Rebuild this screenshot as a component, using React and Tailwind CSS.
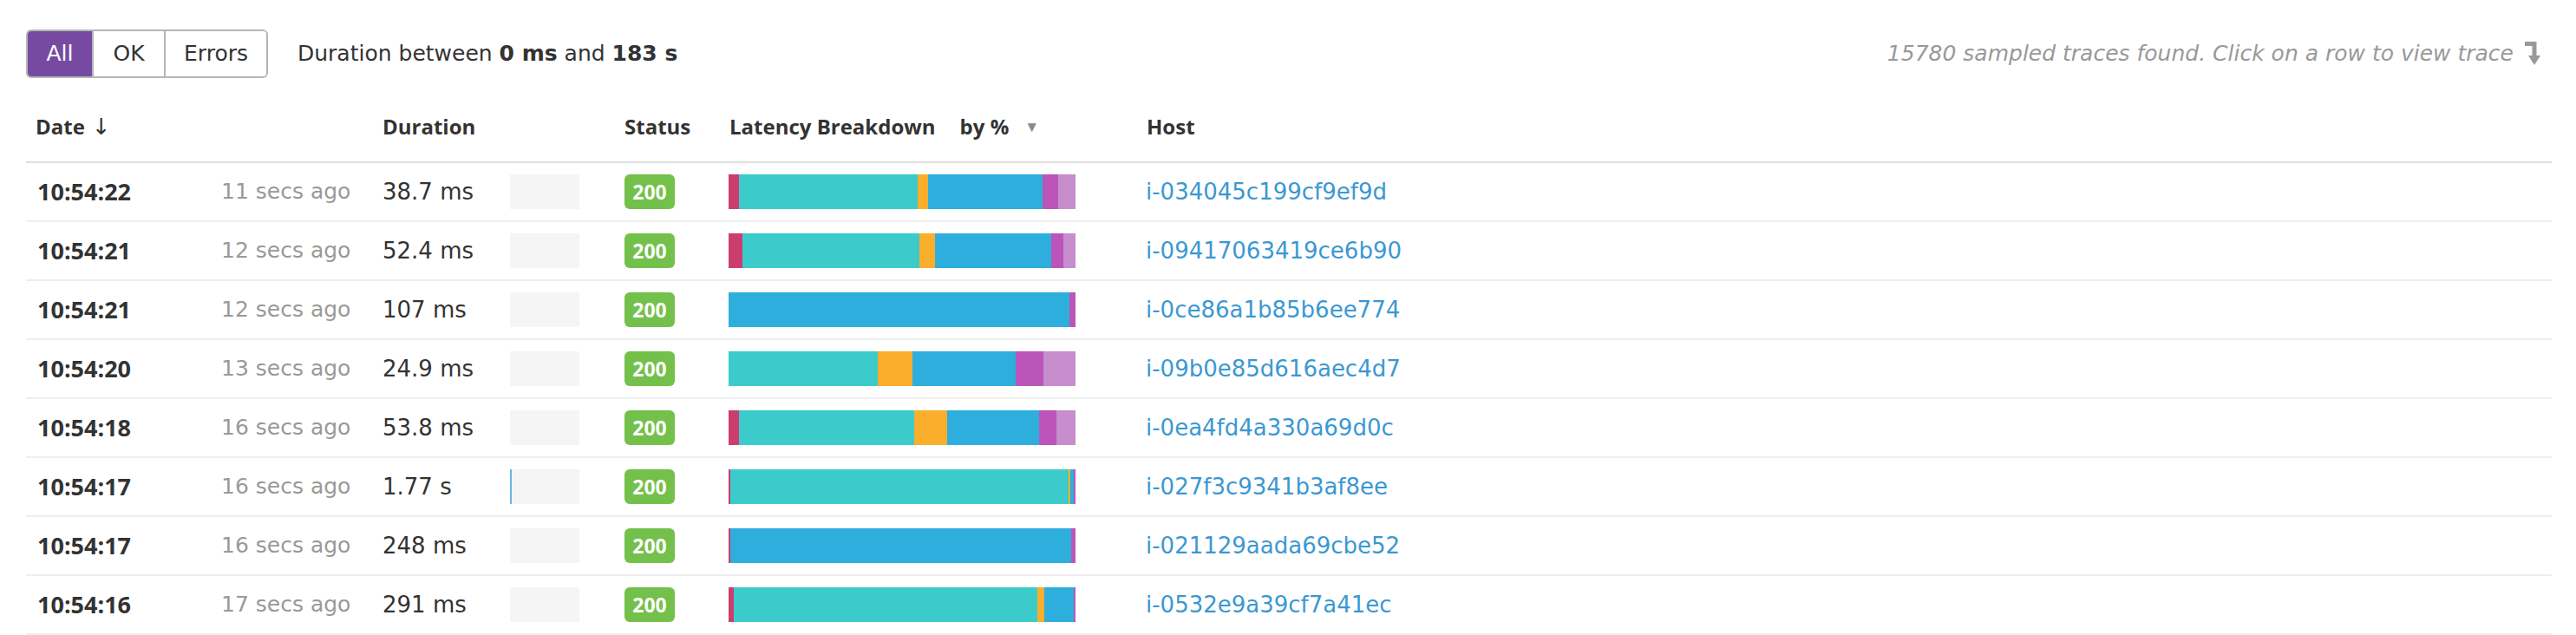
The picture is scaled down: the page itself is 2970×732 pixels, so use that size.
import { useState } from 'react';

const COLORS = {
  pink: 'bg-[#cc3d6f]',
  teal: 'bg-[#3ccbcb]',
  orange: 'bg-[#f9ae2c]',
  blue: 'bg-[#2eaedd]',
  purple: 'bg-[#bb55b9]',
  lilac: 'bg-[#c78dcc]',
};

const traces = [
  { time: '10:54:22', ago: '11 secs ago', duration: '38.7 ms', host: 'i-034045c199cf9ef9d', spans: [['pink', 12], ['teal', 206], ['orange', 12], ['blue', 132], ['purple', 18], ['lilac', 20]] },
  { time: '10:54:21', ago: '12 secs ago', duration: '52.4 ms', host: 'i-09417063419ce6b90', spans: [['pink', 16], ['teal', 204], ['orange', 18], ['blue', 134], ['purple', 14], ['lilac', 14]] },
  { time: '10:54:21', ago: '12 secs ago', duration: '107 ms', host: 'i-0ce86a1b85b6ee774', spans: [['blue', 393], ['purple', 7]] },
  { time: '10:54:20', ago: '13 secs ago', duration: '24.9 ms', host: 'i-09b0e85d616aec4d7', spans: [['teal', 172], ['orange', 40], ['blue', 119], ['purple', 32], ['lilac', 37]] },
  { time: '10:54:18', ago: '16 secs ago', duration: '53.8 ms', host: 'i-0ea4fd4a330a69d0c', spans: [['pink', 12], ['teal', 202], ['orange', 38], ['blue', 106], ['purple', 20], ['lilac', 22]] },
  { time: '10:54:17', ago: '16 secs ago', duration: '1.77 s', host: 'i-027f3c9341b3af8ee', long: true, spans: [['pink', 2], ['teal', 390], ['orange', 2], ['blue', 4], ['purple', 2]] },
  { time: '10:54:17', ago: '16 secs ago', duration: '248 ms', host: 'i-021129aada69cbe52', spans: [['pink', 2], ['blue', 393], ['purple', 5]] },
  { time: '10:54:16', ago: '17 secs ago', duration: '291 ms', host: 'i-0532e9a39cf7a41ec', spans: [['pink', 6], ['teal', 350], ['orange', 8], ['blue', 34], ['purple', 2]] },
];

function HookArrow() {
  return (
    <svg width="20" height="28" viewBox="0 0 20 28" className="ml-[12px]">
      <path d="M1 2.5 H12 V18" stroke="#999" strokeWidth="5" fill="none" />
      <path d="M5 16 H19 L12 27 Z" fill="#999" />
    </svg>
  );
}

function FilterButtons() {
  const [active, setActive] = useState('All');
  const items = ['All', 'OK', 'Errors'];

  return (
    <div className="flex h-[56px] border-2 border-[#b5b5b5] rounded-[6px] overflow-hidden">
      {items.map((item, i) => (
        <button
          key={item}
          onClick={() => setActive(item)}
          className={`h-full text-[25px] ${i > 0 ? 'border-l-2 border-[#b5b5b5]' : ''} ${
            item === 'All' ? 'w-[74px]' : item === 'OK' ? 'w-[83px]' : 'w-[118px]'
          } ${active === item ? 'bg-[#774aa2] text-white' : 'bg-white text-[#333]'}`}
        >
          {item}
        </button>
      ))}
    </div>
  );
}

export default function App() {
  return (
    <div className="bg-white min-h-screen pl-[30px] pr-[28px] pt-[34px] text-[#333] font-['DejaVu_Sans',sans-serif] overflow-hidden">
      <div className="flex items-center">
        <FilterButtons />
        <div className="ml-[34px] text-[25px]">
          Duration between <b>0 ms</b> and <b>183 s</b>
        </div>
        <div className="ml-auto mr-[12px] flex items-center text-[25px] italic text-[#999]">
          15780 sampled traces found. Click on a row to view trace
          <HookArrow />
        </div>
      </div>

      <div className="flex items-center h-[98px] pt-[16px] pl-[11px] border-b-2 border-[#dddddd] text-[24px] font-bold font-['Open_Sans',sans-serif]">
        <div className="w-[400px] flex items-center">
          Date <span className="ml-[8px] font-normal text-[26px] font-['DejaVu_Sans',sans-serif]">↓</span>
        </div>
        <div className="w-[279px]">Duration</div>
        <div className="w-[121px]">Status</div>
        <div className="w-[481px] flex items-center">
          Latency Breakdown
          <span className="ml-[28px]">by %</span>
          <span className="ml-[18px] text-[17px] text-[#888] font-normal">▼</span>
        </div>
        <div>Host</div>
      </div>

      {traces.map((t, idx) => (
        <div key={idx} className="flex items-center h-[68px] pl-[13px] border-b-2 border-[#eeeeee] text-[26px] cursor-pointer">
          <div className="w-[212px] font-bold text-[27px] font-['Open_Sans',sans-serif]">{t.time}</div>
          <div className="w-[186px] text-[#999] text-[25px]">{t.ago}</div>
          <div className="w-[147px]">{t.duration}</div>
          <div className="w-[132px]">
            <div className={`w-[80px] h-[40px] bg-[#f5f5f5] ${t.long ? 'border-l-2 border-[#6ab4e6]' : ''}`} />
          </div>
          <div className="w-[120px]">
            <span className="flex items-center justify-center w-[58px] h-[40px] rounded-[6px] bg-[#73c04a] text-white text-[23px] font-bold font-['Open_Sans',sans-serif]">200</span>
          </div>
          <div className="w-[481px]">
            <div className="flex w-[400px] h-[40px]">
              {t.spans.map(([c, w], i) => (
                <div key={i} className={`h-full ${COLORS[c]}`} style={{ width: `${w}px` }} />
              ))}
            </div>
          </div>
          <a className="text-[#3b98d2]">{t.host}</a>
        </div>
      ))}
    </div>
  );
}
